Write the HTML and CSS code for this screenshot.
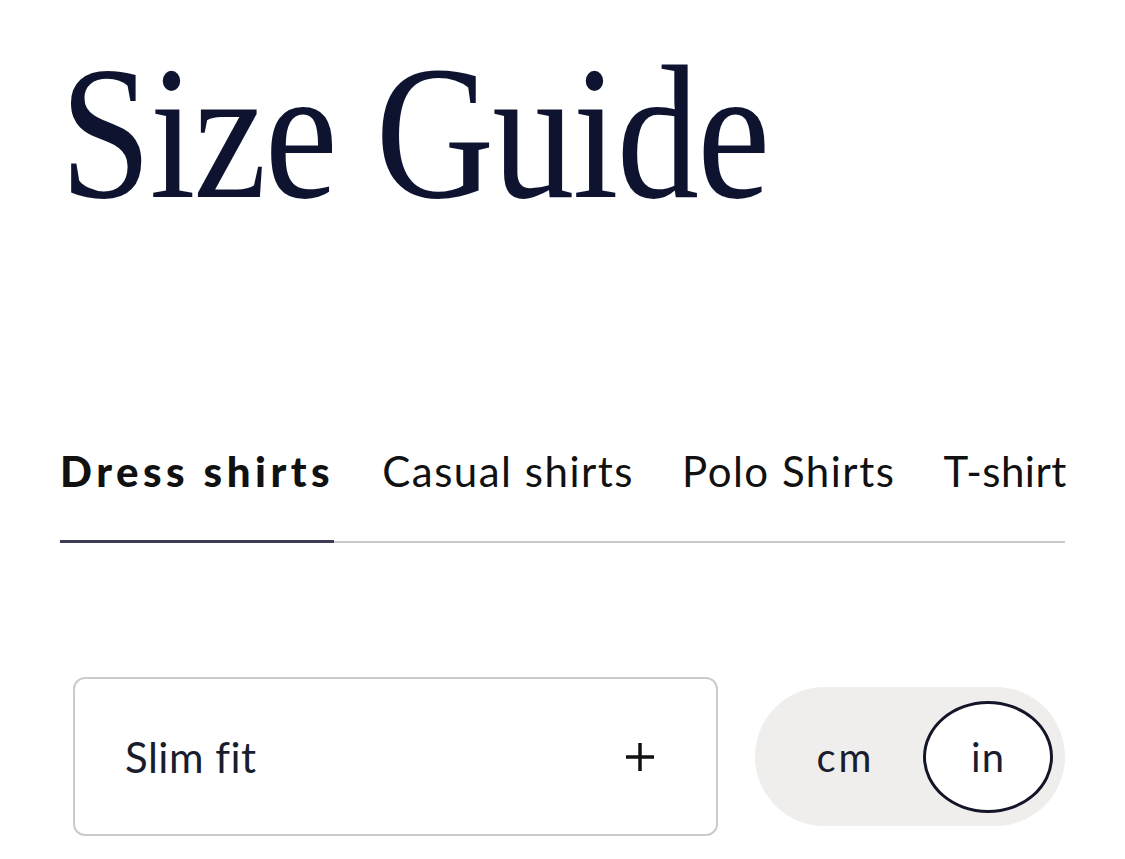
FILE: index.html
```html
<!DOCTYPE html>
<html lang="en">
<head>
  <meta charset="UTF-8">
  <title>Size Guide</title>
  <link rel="stylesheet" href="styles.css">
</head>
<body>

<div class="page">
  <h1 class="titulo">Size Guide</h1>

  <nav class="tabs">
    <a class="tab activo">Dress shirts</a>
    <a class="tab">Casual shirts</a>
    <a class="tab">Polo Shirts</a>
    <a class="tab">T-shirt</a>
  </nav>

  <div class="controles">
    <div class="selector">
      <span>Slim fit</span>
      <svg class="mas" width="30" height="30" viewBox="0 0 30 30">
        <path d="M15 1 V29 M1 15 H29" stroke="#111" stroke-width="3.5" fill="none"/>
      </svg>
    </div>

    <div class="unidades">
      <span class="unidad">cm</span>
      <span class="unidad elegida">in</span>
    </div>
  </div>
</div>

</body>
</html>
```

FILE: styles.css
```css
* {
  margin: 0;
  padding: 0;
  box-sizing: border-box;
}

body {
  background: white;
  color: #111;
  font-family: Lato, "Open Sans", sans-serif;
}

.page {
  padding: 38px 60px 0 60px;
}

/* la fuente del titulo es mas estrecha, se comprime a lo ancho */
.titulo {
  font-family: "Liberation Serif", serif;
  font-weight: normal;
  font-size: 190px;
  line-height: 1;
  letter-spacing: -2px;
  color: #0e1330;
  transform: scaleX(0.865);
  transform-origin: left center;
  white-space: nowrap;
}

.tabs {
  display: flex;
  gap: 48px;
  margin-top: 218px;
  border-bottom: 2px solid #c8c8c8;
}

.tab {
  flex-shrink: 0;
  white-space: nowrap;
  font-size: 42px;
  line-height: 1.2;
  letter-spacing: 1.5px;
  padding-bottom: 44px;
  margin-bottom: -2px;
  border-bottom: 3px solid transparent;
  color: #111;
  cursor: pointer;
}

.tab:last-child {
  letter-spacing: 0.5px;
}

.tab.activo {
  font-weight: 900;
  letter-spacing: 4.5px;
  border-bottom-color: #3c3d55;
}

.controles {
  display: flex;
  align-items: center;
  gap: 37px;
  margin-top: 134px;
  padding-left: 13px;
}

.selector {
  flex: 1;
  height: 159px;
  border: 2px solid #cbcbcb;
  border-radius: 12px;
  padding: 0 61px 0 50px;
  display: flex;
  align-items: center;
  justify-content: space-between;
  font-size: 42px;
  letter-spacing: 0.5px;
  color: #1a1d2e;
}

.unidades {
  width: 310px;
  height: 139px;
  background: #efeeec;
  border-radius: 70px;
  padding: 13px 12px 13px 13px;
  display: flex;
  align-items: center;
}

.unidad {
  flex: 1;
  text-align: center;
  font-size: 40px;
  letter-spacing: 3px;
  color: #1a1d2e;
}

.unidad.elegida {
  flex: none;
  width: 130px;
  height: 112px;
  border: 3px solid #141628;
  border-radius: 50%;
  background: white;
  letter-spacing: 1px;
  display: flex;
  align-items: center;
  justify-content: center;
}
```
